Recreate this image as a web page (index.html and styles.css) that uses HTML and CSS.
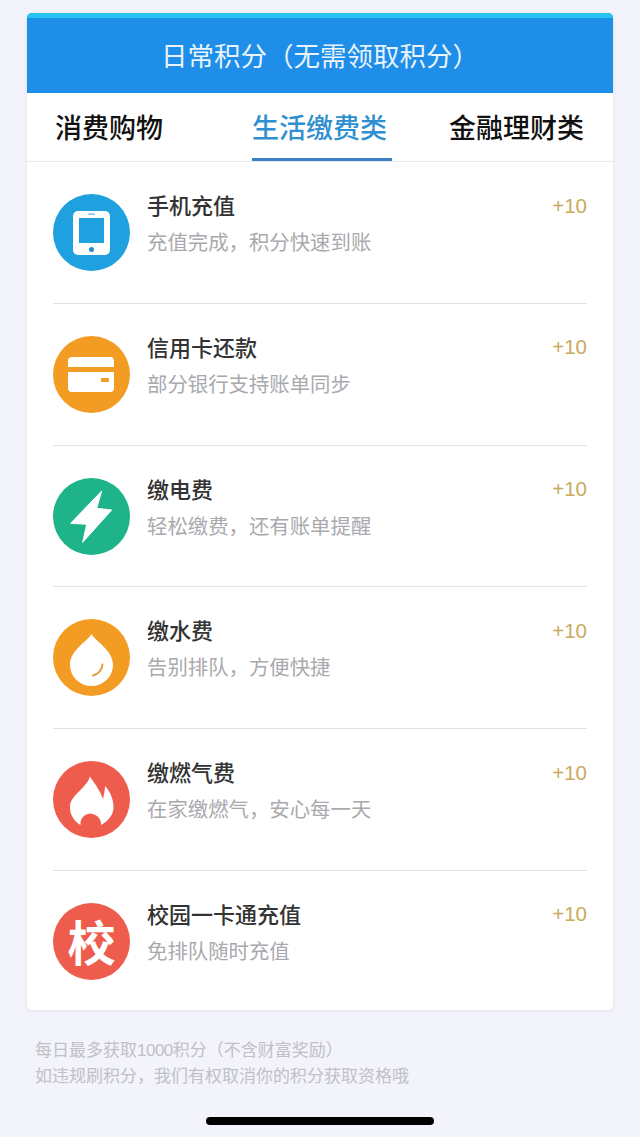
FILE: index.html
```html
<!DOCTYPE html>
<html lang="zh-CN">
<head>
    <meta charset="UTF-8">
    <meta name="viewport" content="width=device-width, initial-scale=1.0">
    <title>日常积分</title>
    <link rel="stylesheet" href="styles.css">
</head>
<body>

    <div class="card">
        <div class="card-title">日常积分（无需领取积分）</div>

        <div class="tabs">
            <div class="tab tab-first">消费购物</div>
            <div class="tab tab-active">生活缴费类</div>
            <div class="tab tab-last">金融理财类</div>
        </div>

        <div class="row">
            <svg class="icon" viewBox="0 0 77 77">
                <circle cx="38.5" cy="38.5" r="38.5" fill="#1fa0df"/>
                <rect x="20" y="17" width="37" height="44" rx="5" fill="#fff"/>
                <rect x="26" y="24" width="25" height="25" fill="#1fa0df"/>
                <rect x="35" y="19.5" width="7" height="1.5" rx="0.7" fill="#7fc4e8"/>
                <circle cx="38.5" cy="55.5" r="2.5" fill="#1f8fc8"/>
            </svg>
            <div class="row-text">
                <div class="row-name">手机充值</div>
                <div class="row-desc">充值完成，积分快速到账</div>
            </div>
            <div class="points">+10</div>
        </div>

        <div class="row">
            <svg class="icon" viewBox="0 0 77 77">
                <circle cx="38.5" cy="38.5" r="38.5" fill="#f39c24"/>
                <rect x="15" y="21" width="46" height="35" rx="4" fill="#fff"/>
                <rect x="15" y="31" width="46" height="5" fill="#f39c24"/>
                <rect x="48" y="42" width="8" height="4" rx="1" fill="#f39c24"/>
            </svg>
            <div class="row-text">
                <div class="row-name">信用卡还款</div>
                <div class="row-desc">部分银行支持账单同步</div>
            </div>
            <div class="points">+10</div>
        </div>

        <div class="row">
            <svg class="icon" viewBox="0 0 77 77">
                <circle cx="38.5" cy="38.5" r="38.5" fill="#1fb389"/>
                <path d="M48.7 13 L17.7 45.3 L33.7 46.3 L29.7 64.3 L58.7 32 L43.7 30.3 Z" fill="#fff" stroke="#fff" stroke-width="1" stroke-linejoin="round"/>
            </svg>
            <div class="row-text">
                <div class="row-name">缴电费</div>
                <div class="row-desc">轻松缴费，还有账单提醒</div>
            </div>
            <div class="points">+10</div>
        </div>

        <div class="row">
            <svg class="icon" viewBox="0 0 77 77">
                <circle cx="38.5" cy="38.5" r="38.5" fill="#f39c24"/>
                <path d="M38.5 15 C43 23 60 31 60 46 A21.5 21 0 0 1 17 46 C17 31 34 23 38.5 15 Z" fill="#fff"/>
                <path d="M40 56.5 C45 55.5 49 51 49.5 45.5" fill="none" stroke="#e0a040" stroke-width="2" stroke-linecap="round"/>
            </svg>
            <div class="row-text">
                <div class="row-name">缴水费</div>
                <div class="row-desc">告别排队，方便快捷</div>
            </div>
            <div class="points">+10</div>
        </div>

        <div class="row">
            <svg class="icon" viewBox="0 0 77 77">
                <circle cx="38.5" cy="38.5" r="38.5" fill="#ee5c4d"/>
                <path d="M37 15.5 C41 22 47 29 50 38 C51 33 52 29 52 25 C57 30 60.5 38 60.5 46 C60.5 54 55 60 48 64 C48.5 58 44 53 37 52.5 C31 53 27 58 27.5 64 C21 60 17 54 17 46 C17 34 33 28 37 15.5 Z" fill="#fff"/>
            </svg>
            <div class="row-text">
                <div class="row-name">缴燃气费</div>
                <div class="row-desc">在家缴燃气，安心每一天</div>
            </div>
            <div class="points">+10</div>
        </div>

        <div class="row row-last">
            <div class="icon icon-school">校</div>
            <div class="row-text">
                <div class="row-name">校园一卡通充值</div>
                <div class="row-desc">免排队随时充值</div>
            </div>
            <div class="points">+10</div>
        </div>
    </div>

    <div class="notes">
        <p>每日最多获取<span class="num">1000</span>积分（不含财富奖励）</p>
        <p>如违规刷积分，我们有权取消你的积分获取资格哦</p>
    </div>

    <div class="home-bar"></div>

</body>
</html>
```

FILE: styles.css
```css
body {
    font-family: "Noto Sans CJK SC", "Liberation Sans", sans-serif;
    background-color: #f3f3fb;
    color: #333;
    margin: 0;
    padding: 13px 27px 0;
}

.card {
    background: white;
    border-radius: 5px;
    box-shadow: 0 1px 4px rgba(0, 0, 0, 0.08);
    overflow: hidden;
    height: 997px;
}

.card-title {
    height: 75px;
    line-height: 73px;
    border-top: 5px solid #29c3f2;
    background: #1e8ee8;
    color: #e8f3fc;
    font-size: 26.5px;
    text-align: center;
}

.tabs {
    display: flex;
    box-sizing: border-box;
    height: 69px;
    border-bottom: 1px solid #e8e8ec;
}

.tab {
    height: 68px;
    line-height: 68px;
    font-size: 27px;
    font-weight: 500;
    color: #111;
    white-space: nowrap;
}

.tab-first {
    margin-left: 28px;
}

.tab-active {
    box-sizing: border-box;
    width: 140px;
    margin-left: 89px;
    color: #2f8fd0;
    border-bottom: 3px solid #3b83c4;
}

.tab-last {
    margin-left: 57px;
}

.row {
    display: flex;
    align-items: flex-start;
    box-sizing: border-box;
    height: 141.8px;
    margin: 0 26px;
    padding-top: 32px;
    border-bottom: 1px solid #e2e2e6;
}

.row-last {
    border-bottom: none;
}

.icon {
    flex: none;
    display: block;
    width: 77px;
    height: 77px;
}

.icon-school {
    border-radius: 50%;
    background: #ee5c4d;
    color: white;
    font-size: 48px;
    font-weight: 700;
    line-height: 75px;
    text-align: center;
}

.row-text {
    flex: 1;
    margin: -5px 0 0 17px;
}

.row-name {
    font-size: 22px;
    font-weight: 500;
    line-height: 30px;
    color: #333;
}

.row-desc {
    margin-top: 7px;
    font-size: 20.4px;
    line-height: 30px;
    color: #a9a9ae;
}

.points {
    margin-top: -3.5px;
    font-family: "Liberation Sans", sans-serif;
    font-size: 20.5px;
    line-height: 30px;
    color: #c9ab5c;
}

.notes {
    margin: 28px 0 0 8px;
    font-family: "Liberation Sans", "Noto Sans CJK SC", sans-serif;
    font-size: 17px;
    line-height: 26px;
    color: #c0c0c6;
}

.notes p {
    margin: 0;
}

.num {
    letter-spacing: -0.5px;
}

.home-bar {
    width: 228px;
    height: 8px;
    margin: 27px auto 0;
    border-radius: 4px;
    background: #000;
}
```
